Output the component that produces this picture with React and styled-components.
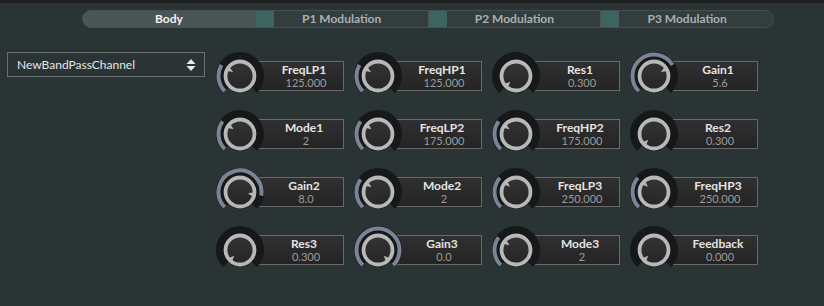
import React from 'react';
import styled, { createGlobalStyle } from 'styled-components';

const GlobalStyle = createGlobalStyle`
  html, body {
    margin: 0;
    padding: 0;
    background: #2a3435;
    font-family: 'Lato', 'Noto Sans', sans-serif;
  }
`;

const tabs = ['Body', 'P1 Modulation', 'P2 Modulation', 'P3 Modulation'];

const params = [
  { name: 'FreqLP1', value: '125.000', v: 0.28 },
  { name: 'FreqHP1', value: '125.000', v: 0.28 },
  { name: 'Res1', value: '0.300', v: 0 },
  { name: 'Gain1', value: '5.6', v: 0.72 },
  { name: 'Mode1', value: '2', v: 0.3 },
  { name: 'FreqLP2', value: '175.000', v: 0.3 },
  { name: 'FreqHP2', value: '175.000', v: 0.3 },
  { name: 'Res2', value: '0.300', v: 0 },
  { name: 'Gain2', value: '8.0', v: 0.87 },
  { name: 'Mode2', value: '2', v: 0.3 },
  { name: 'FreqLP3', value: '250.000', v: 0.32 },
  { name: 'FreqHP3', value: '250.000', v: 0.32 },
  { name: 'Res3', value: '0.300', v: 0 },
  { name: 'Gain3', value: '0.0', v: 1 },
  { name: 'Mode3', value: '2', v: 0.3 },
  { name: 'Feedback', value: '0.000', v: 0 },
];

// angle in degrees, clockwise from top
const pt = (r, a) => {
  const rad = (a * Math.PI) / 180;
  return [24 + r * Math.sin(rad), 24 - r * Math.cos(rad)];
};

const arc = (r, a0, a1) => {
  const [x0, y0] = pt(r, a0);
  const [x1, y1] = pt(r, a1);
  const large = a1 - a0 > 180 ? 1 : 0;
  return `M ${x0} ${y0} A ${r} ${r} 0 ${large} 1 ${x1} ${y1}`;
};

function Knob({ v }) {
  const start = -135;
  const end = start + 270 * v;
  const tip = pt(8, end);
  const b1 = pt(14.5, end - 10);
  const b2 = pt(14.5, end + 10);
  return (
    <KnobSvg width="48" height="48" viewBox="0 0 48 48">
      <defs>
        <linearGradient id="knobFill" x1="0" y1="0" x2="0" y2="1">
          <stop offset="0" stopColor="#343434" />
          <stop offset="1" stopColor="#252525" />
        </linearGradient>
      </defs>
      <path d={arc(20, -135, 135)} stroke="#15191a" strokeWidth="8" fill="none" />
      {v > 0.005 && (
        <path d={arc(21.5, start, end)} stroke="#7b8397" strokeWidth="4" fill="none" />
      )}
      <circle cx="24" cy="24" r="17" fill="rgba(0,0,0,0.35)" />
      <circle cx="24" cy="24" r="14.5" fill="url(#knobFill)" stroke="#b8b8b8" strokeWidth="3.8" />
      <polygon
        points={`${tip[0]},${tip[1]} ${b1[0]},${b1[1]} ${b2[0]},${b2[1]}`}
        fill="#b8b8b8"
      />
    </KnobSvg>
  );
}

function UpDownIcon() {
  return (
    <svg width="10" height="14" viewBox="0 0 10 14">
      <polygon points="5,1 9.5,6 0.5,6" fill="#e8e8e8" />
      <polygon points="0.5,8 9.5,8 5,13" fill="#e8e8e8" />
    </svg>
  );
}

export default function App() {
  return (
    <Page>
      <GlobalStyle />
      <TopStrip />
      <TabBar>
        {tabs.map((t, i) => (
          <Tab key={t} $active={i === 0}>
            {i > 0 && <TabSwatch />}
            <TabLabel>{t}</TabLabel>
          </Tab>
        ))}
      </TabBar>
      <Main>
        <Select>
          <span>NewBandPassChannel</span>
          <UpDownIcon />
        </Select>
        <KnobGrid>
          {params.map((p) => (
            <Cell key={p.name}>
              <Knob v={p.v} />
              <ValueBox>
                <ParamName>{p.name}</ParamName>
                <ParamValue>{p.value}</ParamValue>
              </ValueBox>
            </Cell>
          ))}
        </KnobGrid>
      </Main>
    </Page>
  );
}

const Page = styled.div`
  width: 824px;
  height: 306px;
  background: #2a3435;
  overflow: hidden;
`;

const TopStrip = styled.div`
  height: 3px;
  background: #1e2020;
`;

const TabBar = styled.div`
  box-sizing: border-box;
  display: flex;
  margin: 7px 0 0 82px;
  width: 692px;
  height: 18px;
  gap: 1px;
  background: #485252;
  border: 1px solid #465050;
  border-radius: 9px;
  overflow: hidden;
`;

const Tab = styled.div`
  position: relative;
  flex: 1;
  display: flex;
  align-items: center;
  justify-content: center;
  background: ${(p) => (p.$active ? '#4b5556' : '#333d3e')};
  color: ${(p) => (p.$active ? '#f2f2f2' : '#a9b0b0')};
  font-size: 12px;
  font-weight: 700;
`;

const TabSwatch = styled.div`
  position: absolute;
  left: 0;
  top: 0;
  bottom: 0;
  width: 18px;
  background: #3e6461;
`;

const TabLabel = styled.span`
  line-height: 16px;
`;

const Main = styled.div`
  display: flex;
  align-items: flex-start;
  margin-top: 24px;
  padding-left: 7px;
  gap: 11px;
`;

const Select = styled.div`
  box-sizing: border-box;
  width: 198px;
  height: 25px;
  border: 1px solid #697070;
  display: flex;
  align-items: center;
  justify-content: space-between;
  padding: 0 8px 0 9px;
  color: #e6e6e6;
  font-size: 12px;
`;

const KnobGrid = styled.div`
  display: grid;
  grid-template-columns: repeat(4, 128px);
  grid-auto-rows: 48px;
  column-gap: 10px;
  row-gap: 10px;
`;

const Cell = styled.div`
  display: flex;
  align-items: center;
`;

const KnobSvg = styled.svg`
  position: relative;
  z-index: 1;
  flex: none;
  display: block;
`;

const ValueBox = styled.div`
  box-sizing: border-box;
  margin-left: -8px;
  width: 88px;
  height: 30px;
  padding-left: 8px;
  border: 1px solid #696969;
  background: linear-gradient(#303030, #242424);
  display: flex;
  flex-direction: column;
  align-items: center;
  justify-content: center;
`;

const ParamName = styled.div`
  color: #e4e4e4;
  font-size: 12px;
  font-weight: 700;
  line-height: 12px;
`;

const ParamValue = styled.div`
  color: #9c9c9c;
  font-size: 11px;
  line-height: 11px;
  margin-top: 1px;
  padding-left: 4px;
`;
